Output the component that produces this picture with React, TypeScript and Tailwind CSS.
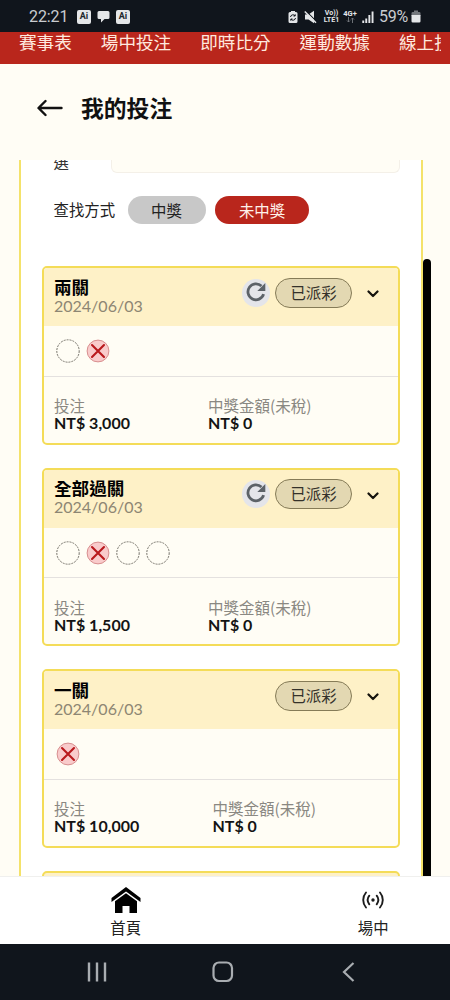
import React from "react";

type Leg = "pending" | "lost";

interface Bet {
  title: string;
  date: string;
  legs: Leg[];
  stake: string;
  payout: string;
  refresh: boolean;
  payoutColumn: string;
}

const bets: Bet[] = [
  { title: "兩關", date: "2024/06/03", legs: ["pending", "lost"], stake: "NT$ 3,000", payout: "NT$ 0", refresh: true, payoutColumn: "w-[154px]" },
  { title: "全部過關", date: "2024/06/03", legs: ["pending", "lost", "pending", "pending"], stake: "NT$ 1,500", payout: "NT$ 0", refresh: true, payoutColumn: "w-[154px]" },
  { title: "一關", date: "2024/06/03", legs: ["lost"], stake: "NT$ 10,000", payout: "NT$ 0", refresh: false, payoutColumn: "w-[158.500px]" },
];

function StatusBar() {
  return (
    <div className="flex h-8 shrink-0 items-center bg-[#10151c] pl-[29px] pr-[29px] pt-px text-[#e4e6e8]">
      <span className="w-[48px] font-[Roboto] text-[16px] leading-none tracking-[-0.1px] text-[#c9ccd0]">22:21</span>
      <AiBadge />
      <svg className="mx-[6px] shrink-0" width="13" height="13" viewBox="0 0 13 13">
        <path d="M2 1h9a1.500 1.500 0 0 1 1.500 1.500v5A1.500 1.500 0 0 1 11 9H7.500L4 12.500V9H2A1.500 1.500 0 0 1 .5 7.500v-5A1.500 1.500 0 0 1 2 1z" fill="currentColor" />
      </svg>
      <AiBadge />
      <div className="ml-auto flex items-center">
        <svg width="10" height="14" viewBox="0 0 10 14">
          <path d="M3 1h4v1h1a1.500 1.500 0 0 1 1.500 1.500v8A1.500 1.500 0 0 1 8 13H2a1.500 1.500 0 0 1-1.500-1.500v-8A1.500 1.500 0 0 1 2 2h1z" fill="currentColor" />
          <path d="M2.500 7a2.500 2.500 0 0 1 4.500-1.200M7.500 8a2.500 2.500 0 0 1-4.500 1.200M7.200 4.300v1.700H5.500M2.800 10.700V9h1.700" fill="none" stroke="#10151c" strokeWidth="1" />
        </svg>
        <svg className="ml-[6px]" width="13" height="14" viewBox="0 0 13 14">
          <path d="M1 4.500h3.500L10 .8v12.400L4.500 9.500H1z" fill="currentColor" />
          <path d="M1.800 .8l11 11" stroke="#10151c" strokeWidth="1.200" />
          <path d="M.8 1.500l11.200 11.200" stroke="currentColor" strokeWidth="1.500" />
        </svg>
        <div className="ml-[6px] flex w-[17px] flex-col items-center font-[Roboto] text-[7px] font-bold leading-[6.500px]">
          <span className="leading-[6.500px]">Vo))</span>
          <span className="leading-[6.500px]">LTE1</span>
        </div>
        <div className="ml-[3px] flex w-[14px] flex-col items-center font-[Roboto] text-[7.500px] font-bold">
          <span className="leading-[7px]">4G+</span>
          <svg width="9" height="6" viewBox="0 0 9 6">
            <path d="M2.500 0v5M1 3.500L2.500 5 4 3.500M6.500 6V1M5 2.500L6.500 1 8 2.500" fill="none" stroke="#777b80" strokeWidth=".9" />
          </svg>
        </div>
        <svg className="ml-[5px]" width="12" height="12" viewBox="0 0 12 12">
          <path d="M.3 12V9.500h1.900V12zM3.300 12V7.500h1.900V12zM6.400 12V4h1.900v8zM9.600 12V.5h1.900V12z" fill="currentColor" />
        </svg>
        <span className="ml-[5px] w-[32px] font-[Roboto] text-[16px] leading-none tracking-[-0.3px] text-[#c9ccd0]">59%</span>
        <svg width="10" height="13" viewBox="0 0 10 13">
          <path d="M3 .5h4V2h1.200A1.300 1.300 0 0 1 9.500 3.300V6h-9V3.300A1.300 1.300 0 0 1 1.800 2H3z" fill="#73777c" />
          <path d="M.5 5h9v6.200a1.300 1.300 0 0 1-1.300 1.300H1.800A1.300 1.300 0 0 1 .5 11.200z" fill="currentColor" />
        </svg>
      </div>
    </div>
  );
}

function AiBadge() {
  return (
    <span className="flex h-[14px] w-[14px] items-center justify-center rounded-[2px] bg-[#e4e6e8] font-[Roboto] text-[9px] font-bold leading-none text-[#20252b]">
      Ai
    </span>
  );
}

function TopTabs() {
  return (
    <div className="h-8 shrink-0 bg-[#b9261c] px-[9px]">
      <nav className="flex gap-[29px] overflow-hidden whitespace-nowrap pl-[10px] text-[17.600px] leading-[22px] text-[#ffe9df]">
        <span>賽事表</span>
        <span>場中投注</span>
        <span>即時比分</span>
        <span>運動數據</span>
        <span>線上投注</span>
      </nav>
    </div>
  );
}

function LegMark({ leg }: { leg: Leg }) {
  return (
    <svg className="shrink-0" width="24" height="24" viewBox="0 0 24 24" fill="none">
      {leg === "pending" ? (
        <circle cx="12" cy="12" r="11.200" stroke="#77746c" strokeWidth="1" strokeDasharray="2 1" />
      ) : (
        <>
          <circle cx="12" cy="12" r="10.900" fill="#f9cbcb" stroke="#d78e8e" strokeWidth="1" />
          <path d="M6 6l12 12M18 6L6 18" stroke="#b9191c" strokeWidth="2.100" strokeLinecap="round" />
        </>
      )}
    </svg>
  );
}

function BetCard({ bet }: { bet: Bet }) {
  return (
    <article className="flex h-[178.500px] w-[358px] shrink-0 flex-col overflow-hidden rounded-[5px] border-2 border-[#f4dc58] bg-[#fffdf5]">
      <header className="flex h-[58px] shrink-0 items-start justify-between bg-[#fef1c7] pl-[10.500px] pr-[19px]">
        <div className="pt-[9.500px]">
          <h2 className="text-[17.600px] font-bold leading-[19px] text-black">{bet.title}</h2>
          <p className="text-[16px] leading-[18px] text-[#8d8673]">{bet.date}</p>
        </div>
        <div className="flex items-center pt-[9.500px]">
          {bet.refresh && (
            <span className="mr-[5px] flex h-[28px] w-[28px] items-center justify-center rounded-full bg-[#e4e5ea]">
              <svg className="-mt-[2px]" width="22" height="22" viewBox="0 0 22 22" fill="none">
                <path d="M18.600 13.200A8 8 0 1 1 16.500 5" stroke="#5c6268" strokeWidth="2.800" />
                <path d="M20.300 2v8h-8z" fill="#5c6268" />
              </svg>
            </span>
          )}
          <span className="flex h-[30px] w-[77px] items-center justify-center rounded-full border border-[#857b57] bg-[#e3d8b2] pl-px pt-[2px] text-[15.400px] leading-none text-[#34312a]">
            已派彩
          </span>
          <svg className="ml-[15px] mt-[3px]" width="12" height="8" viewBox="0 0 12 8" fill="none">
            <path d="M1.500 1.500L6 6l4.500-4.500" stroke="#15130d" strokeWidth="2.200" strokeLinecap="round" strokeLinejoin="round" />
          </svg>
        </div>
      </header>
      <div className="flex h-[50.500px] shrink-0 items-center gap-[6px] border-b border-[#e4e1df] pl-[12.500px] pt-px">
        {bet.legs.map((leg, i) => (
          <LegMark key={i} leg={leg} />
        ))}
      </div>
      <dl className="flex pl-[10.500px] pt-[19.500px]">
        <div className={bet.payoutColumn}>
          <dt className="font-['Noto_Sans_CJK_TC',sans-serif] text-[15.500px] leading-[18px] text-[#8a8882]">投注</dt>
          <dd className="text-[16px] font-bold leading-[17px] text-[#141414]">{bet.stake}</dd>
        </div>
        <div>
          <dt className="font-['Noto_Sans_CJK_TC',sans-serif] text-[15.500px] leading-[18px] text-[#8a8882]">中獎金額(未稅)</dt>
          <dd className="text-[16px] font-bold leading-[17px] text-[#141414]">{bet.payout}</dd>
        </div>
      </dl>
    </article>
  );
}

function Filters() {
  return (
    <section className="shrink-0 pl-[33px]">
      <div className="flex h-[13px] items-end">
        <span className="flex h-[13px] w-[57px] items-end pb-px text-[15.400px] leading-[20px] text-[#333]">選</span>
        <div className="h-[13px] w-[289px] rounded-b-[6px] border border-t-0 border-[#f4f0e8] bg-[#fffdf5]" />
      </div>
      <div className="mt-[22px] flex h-[29px] items-center text-[15.400px] text-[#222]">
        <span className="w-[74px] pt-[3px]">查找方式</span>
        <button className="h-[28px] w-[78px] rounded-full bg-[#c8c8c8] pt-[2px] leading-[26px]">中獎</button>
        <button className="ml-[9.500px] h-[28px] w-[94px] rounded-full bg-[#b9261c] pt-[2px] leading-[26px] text-[#fff1ea]">未中獎</button>
      </div>
    </section>
  );
}

export default function App() {
  return (
    <div className="flex h-[1000px] w-[450px] flex-col overflow-hidden bg-[#fffdf5] font-['Lato','Noto_Sans_CJK_TC',sans-serif]">
      <StatusBar />
      <TopTabs />
      <header className="flex h-24 shrink-0 items-center pb-[9px] pl-[37px]">
        <svg width="26" height="18" viewBox="0 0 26 18" fill="none">
          <path d="M8.500 2L1.500 9l7 7M2 9h22.500" stroke="#111" strokeWidth="2.400" strokeLinecap="round" strokeLinejoin="round" />
        </svg>
        <h1 className="ml-[18px] pt-px text-[22.800px] font-bold leading-[28px] text-[#111]">我的投注</h1>
      </header>
      <main className="flex h-[716px] shrink-0 overflow-hidden pl-[18.500px]">
        <div className="flex h-full w-[404.500px] shrink-0 flex-col overflow-hidden border-x-2 border-[#f4e26a] bg-white">
          <Filters />
          <div className="mt-[42px] flex flex-col gap-[23px] pl-[21px]">
            {bets.map((bet) => (
              <BetCard key={bet.title} bet={bet} />
            ))}
            <div className="h-[60px] w-[358px] shrink-0 rounded-[5px] border-2 border-[#f4dc58] bg-[#fef1c7]" />
          </div>
        </div>
        <div className="mt-[99px] h-[640px] w-[8px] shrink-0 rounded-full bg-black" />
      </main>
      <nav className="flex h-[68px] shrink-0 border-t border-[#f0f0ee] bg-white pl-[2px] text-[15.400px] leading-[20px] text-[#222]">
        <div className="flex w-[247.500px] shrink-0 flex-col items-center pt-[10px]">
          <svg width="30" height="27" viewBox="0 0 30 27" fill="#000">
            <path d="M15 0l14.500 11v4L15 4.600.5 15v-4z" />
            <path d="M15 6.300l11 8V26h-7.500v-7h-7v7H4V14.300z" />
          </svg>
          <span className="mt-[4px]">首頁</span>
        </div>
        <div className="flex w-[247.500px] shrink-0 flex-col items-center pt-[13px]">
          <svg width="24" height="20" viewBox="0 0 24 20" fill="none" stroke="#1c1c1c" strokeWidth="1.900" strokeLinecap="round">
            <circle cx="12" cy="10" r="1.700" fill="#1c1c1c" stroke="none" />
            <path d="M5 2.500a11.500 11.500 0 0 0 0 15M19 2.500a11.500 11.500 0 0 1 0 15M8.300 5.700a7 7 0 0 0 0 8.600M15.700 5.700a7 7 0 0 1 0 8.600" />
          </svg>
          <span className="mt-[8px]">場中</span>
        </div>
      </nav>
      <footer className="flex h-[56px] shrink-0 items-center bg-[#10151c] pl-[87px] text-[#a9adb1]">
        <svg width="20" height="20" viewBox="0 0 20 20" stroke="currentColor" strokeWidth="2.400">
          <path d="M2 .5v19M10 .5v19M18 .5v19" />
        </svg>
        <svg className="ml-[105px]" width="22" height="22" viewBox="0 0 22 22" fill="none" stroke="currentColor" strokeWidth="2.200">
          <rect x="1.500" y="1.500" width="18.500" height="18.500" rx="5.500" />
        </svg>
        <svg className="ml-[108px]" width="14" height="20" viewBox="0 0 14 20" fill="none" stroke="currentColor" strokeWidth="2.200">
          <path d="M11.500 1L2 10l9.500 9" />
        </svg>
      </footer>
    </div>
  );
}
